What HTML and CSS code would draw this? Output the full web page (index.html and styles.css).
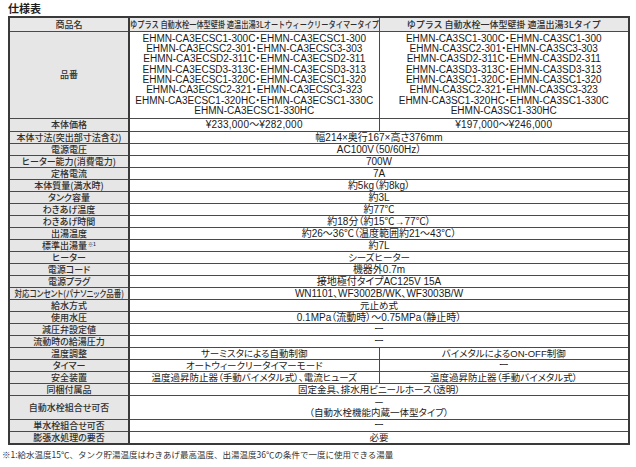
FILE: index.html
```html
<!DOCTYPE html>
<html lang="ja">
<head>
<meta charset="utf-8">
<title>仕様表</title>
<link rel="stylesheet" href="styles.css">
</head>
<body>
<div class="page">
  <h1 class="title">仕様表</h1>
  <table class="spec">
    <colgroup><col class="c-label"><col class="c-val"><col class="c-val"></colgroup>
    <thead>
      <tr class="head">
        <th class="label">商品名</th>
        <th class="pname"><span class="squeeze">ゆプラス 自動水栓一体型壁掛 適温出湯3Lオートウィークリータイマータイプ</span></th>
        <th class="pname">ゆプラス 自動水栓一体型壁掛 適温出湯3Lタイプ</th>
      </tr>
    </thead>
    <tbody>
      <tr class="models">
        <th class="label">品番</th>
        <td class="list">EHMN-CA3ECSC1-300C・EHMN-CA3ECSC1-300<br>EHMN-CA3ECSC2-301・EHMN-CA3ECSC3-303<br>EHMN-CA3ECSD2-311C・EHMN-CA3ECSD2-311<br>EHMN-CA3ECSD3-313C・EHMN-CA3ECSD3-313<br>EHMN-CA3ECSC1-320C・EHMN-CA3ECSC1-320<br>EHMN-CA3ECSC2-321・EHMN-CA3ECSC3-323<br>EHMN-CA3ECSC1-320HC・EHMN-CA3ECSC1-330C<br>EHMN-CA3ECSC1-330HC</td>
        <td class="list">EHMN-CA3SC1-300C・EHMN-CA3SC1-300<br>EHMN-CA3SC2-301・EHMN-CA3SC3-303<br>EHMN-CA3SD2-311C・EHMN-CA3SD2-311<br>EHMN-CA3SD3-313C・EHMN-CA3SD3-313<br>EHMN-CA3SC1-320C・EHMN-CA3SC1-320<br>EHMN-CA3SC2-321・EHMN-CA3SC3-323<br>EHMN-CA3SC1-320HC・EHMN-CA3SC1-330C<br>EHMN-CA3SC1-330HC</td>
      </tr>
      <tr class="price"><th class="label">本体価格</th><td>¥233,000～¥282,000</td><td>¥197,000～¥246,000</td></tr>
      <tr><th class="label">本体寸法(突出部寸法含む)</th><td colspan="2">幅214×奥行167×高さ376mm</td></tr>
      <tr><th class="label">電源電圧</th><td colspan="2">AC100V（50/60Hz）</td></tr>
      <tr><th class="label">ヒーター能力(消費電力)</th><td colspan="2">700W</td></tr>
      <tr><th class="label">定格電流</th><td colspan="2">7A</td></tr>
      <tr><th class="label">本体質量(満水時)</th><td colspan="2">約5kg（約8kg）</td></tr>
      <tr><th class="label">タンク容量</th><td colspan="2">約3L</td></tr>
      <tr><th class="label">わきあげ温度</th><td colspan="2">約77℃</td></tr>
      <tr><th class="label">わきあげ時間</th><td colspan="2">約18分（約15℃→77℃）</td></tr>
      <tr><th class="label">出湯温度</th><td colspan="2">約26～36℃（温度範囲約21～43℃）</td></tr>
      <tr><th class="label">標準出湯量<sup class="note">※1</sup></th><td colspan="2">約7L</td></tr>
      <tr><th class="label">ヒーター</th><td colspan="2" class="jp">シーズヒーター</td></tr>
      <tr><th class="label">電源コード</th><td colspan="2">機器外0.7m</td></tr>
      <tr><th class="label">電源プラグ</th><td colspan="2">接地極付タイプAC125V 15A</td></tr>
      <tr><th class="label"><span class="narrow">対応コンセント(パナソニック品番)</span></th><td colspan="2">WN1101、WF3002B/WK、WF3003B/W</td></tr>
      <tr><th class="label">給水方式</th><td colspan="2" class="jp">元止め式</td></tr>
      <tr><th class="label">使用水圧</th><td colspan="2">0.1MPa（流動時）～0.75MPa（静止時）</td></tr>
      <tr><th class="label">減圧弁設定値</th><td colspan="2">ー</td></tr>
      <tr><th class="label">流動時の給湯圧力</th><td colspan="2">ー</td></tr>
      <tr><th class="label">温度調整</th><td class="jp">サーミスタによる自動制御</td><td class="jp">バイメタルによるON-OFF制御</td></tr>
      <tr><th class="label">タイマー</th><td class="jp">オートウィークリータイマーモード</td><td>ー</td></tr>
      <tr><th class="label">安全装置</th><td class="jp">温度過昇防止器（手動バイメタル式）、電流ヒューズ</td><td class="jp">温度過昇防止器（手動バイメタル式）</td></tr>
      <tr><th class="label">同梱付属品</th><td colspan="2" class="jp">固定金具、排水用ビニールホース（透明）</td></tr>
      <tr class="double"><th class="label">自動水栓組合せ可否</th><td colspan="2" class="jp">ー<br>（自動水栓機能内蔵一体型タイプ）</td></tr>
      <tr><th class="label">単水栓組合せ可否</th><td colspan="2">ー</td></tr>
      <tr><th class="label">膨張水処理の要否</th><td colspan="2" class="jp">必要</td></tr>
    </tbody>
  </table>
  <p class="footnote">※1:給水温度15℃、タンク貯湯温度はわきあげ最高温度、出湯温度36℃の条件で一度に使用できる湯量</p>
</div>
</body>
</html>
```

FILE: styles.css
```css
html, body {
  margin: 0;
  padding: 0;
  background: #ffffff;
}

body {
  font-family: "Noto Sans CJK JP", "Noto Sans", sans-serif;
  color: #222222;
}

.page {
  padding: 1px 8px 0 2px;
}

.title {
  margin: 0 0 1px 6px;
  font-size: 11px;
  line-height: 14px;
  font-weight: 700;
  color: #1e1e1e;
}

.spec {
  margin-left: 6px;
  width: 620px;
  border-collapse: collapse;
  table-layout: fixed;
  border: 2px solid #3a3a3a;
}

.c-label { width: 120px; }
.c-val { width: 250px; }

.spec th,
.spec td {
  border: 1px solid #4a4a4a;
  padding: 0;
  height: 11px;
  line-height: 10px;
  text-align: center;
  vertical-align: middle;
  white-space: nowrap;
  overflow: hidden;
}

.spec td {
  font-family: "Liberation Sans", "Noto Sans CJK JP", sans-serif;
  font-size: 10px;
  color: #1a1a1a;
  font-feature-settings: "palt";
}

.spec td.jp {
  font-size: 9.5px;
}

.spec th {
  font-weight: 500;
  font-size: 9px;
  color: #2e2e2e;
  background: #e6e6e6;
}

.spec th.label {
  border-right: 2px solid #3a3a3a;
  font-feature-settings: "palt";
}

.head th {
  height: 13px;
  line-height: 10px;
  background: #e8e8e8;
}

.pname {
  font-size: 9px;
}

.squeeze {
  display: inline-block;
  line-height: 10px;
  vertical-align: top;
  transform: scaleX(0.8);
  transform-origin: center;
  margin: 0 -40px;
}

.narrow {
  display: inline-block;
  line-height: 10px;
  vertical-align: top;
  transform: scaleX(0.84);
  transform-origin: center;
  margin: 0 -12px;
}

.models td.list {
  height: 86px;
  line-height: 10.3px;
}

.price td {
  height: 12px;
  letter-spacing: 0.2px;
}

.double td,
.double th {
  height: 23px;
}

.note {
  font-size: 5px;
  line-height: 0;
  vertical-align: 3px;
  margin-left: 1px;
}

.footnote {
  margin: 4px 0 0 0;
  font-size: 8.5px;
  line-height: 11px;
  color: #333333;
}
```
